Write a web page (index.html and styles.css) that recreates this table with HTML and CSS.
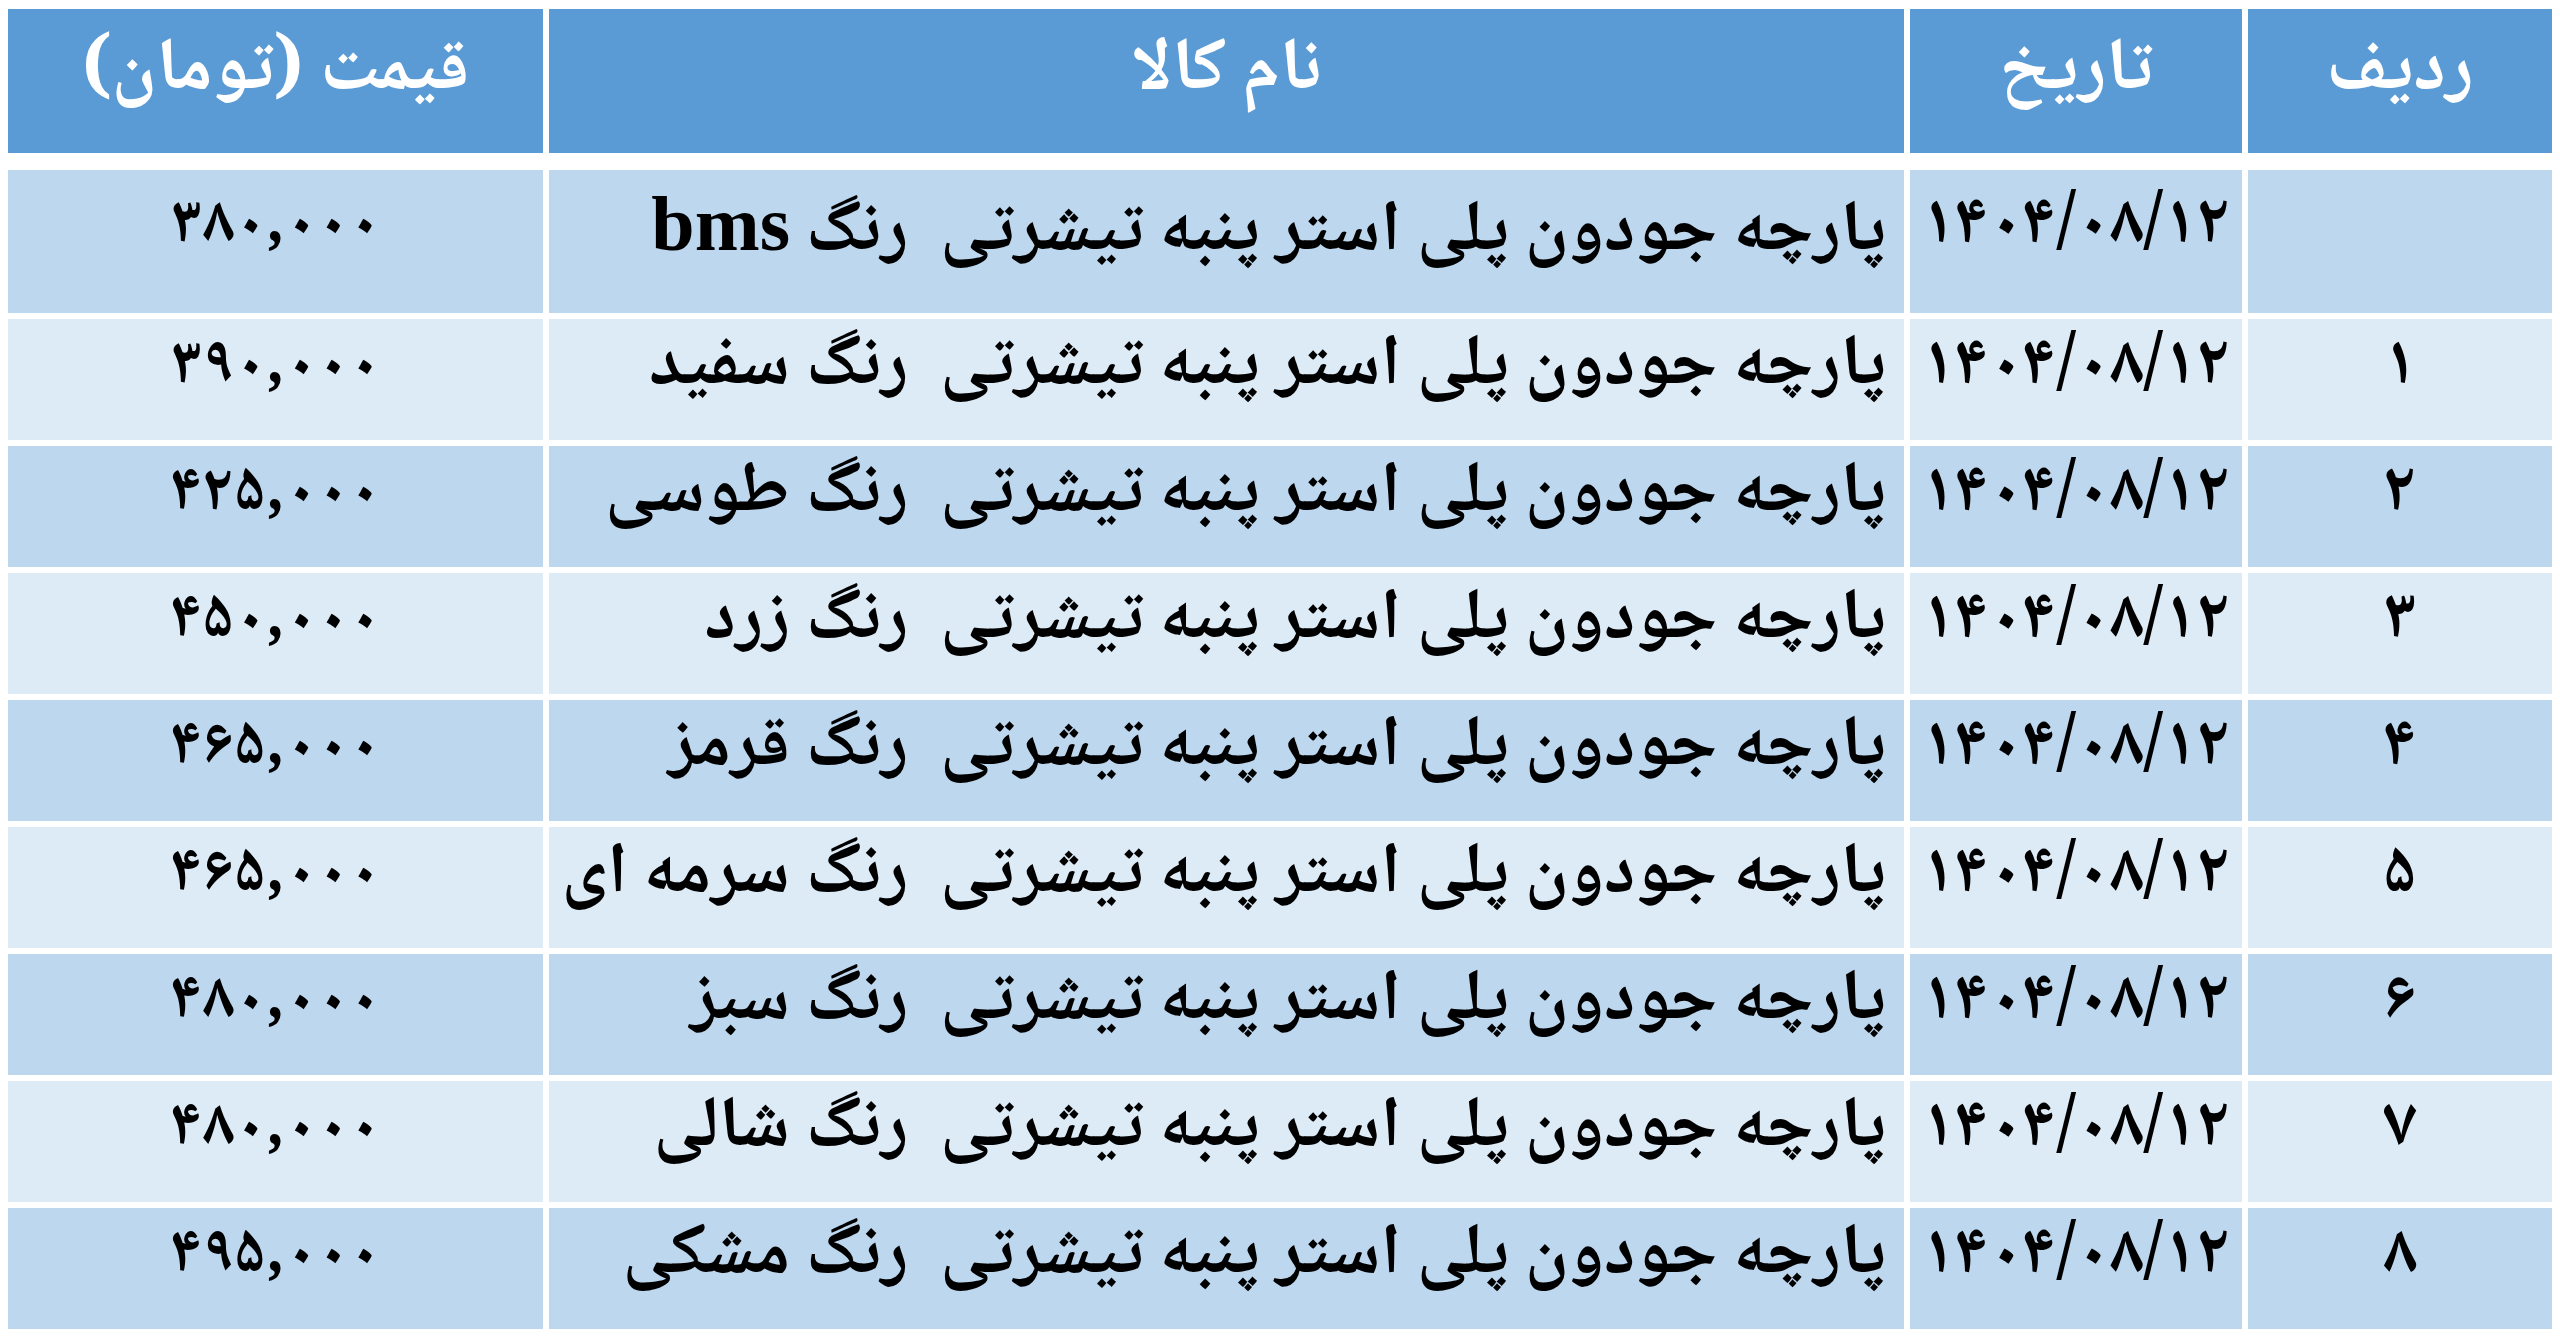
FILE: index.html
```html
<!DOCTYPE html>
<html lang="fa" dir="rtl">
<head>
<meta charset="utf-8">
<title>لیست قیمت</title>
<link rel="stylesheet" href="styles.css">
</head>
<body>
<div class="table">
  <div class="row head">
    <div class="cell"><span>ردیف</span></div>
    <div class="cell"><span>تاریخ</span></div>
    <div class="cell"><span>نام کالا</span></div>
    <div class="cell"><span>قیمت (تومان)</span></div>
  </div>
  <div class="row first dark">
    <div class="cell idx"></div>
    <div class="cell date"><span>۱۴۰۴/۰۸/۱۲</span></div>
    <div class="cell name"><span>پارچه جودون پلی استر پنبه تیشرتی&nbsp; رنگ <span class="latin">bms</span></span></div>
    <div class="cell price"><span>۳۸۰,۰۰۰</span></div>
  </div>
  <div class="row light">
    <div class="cell idx"><span>۱</span></div>
    <div class="cell date"><span>۱۴۰۴/۰۸/۱۲</span></div>
    <div class="cell name"><span>پارچه جودون پلی استر پنبه تیشرتی&nbsp; رنگ سفید</span></div>
    <div class="cell price"><span>۳۹۰,۰۰۰</span></div>
  </div>
  <div class="row dark">
    <div class="cell idx"><span>۲</span></div>
    <div class="cell date"><span>۱۴۰۴/۰۸/۱۲</span></div>
    <div class="cell name"><span>پارچه جودون پلی استر پنبه تیشرتی&nbsp; رنگ طوسی</span></div>
    <div class="cell price"><span>۴۲۵,۰۰۰</span></div>
  </div>
  <div class="row light">
    <div class="cell idx"><span>۳</span></div>
    <div class="cell date"><span>۱۴۰۴/۰۸/۱۲</span></div>
    <div class="cell name"><span>پارچه جودون پلی استر پنبه تیشرتی&nbsp; رنگ زرد</span></div>
    <div class="cell price"><span>۴۵۰,۰۰۰</span></div>
  </div>
  <div class="row dark">
    <div class="cell idx"><span>۴</span></div>
    <div class="cell date"><span>۱۴۰۴/۰۸/۱۲</span></div>
    <div class="cell name"><span>پارچه جودون پلی استر پنبه تیشرتی&nbsp; رنگ قرمز</span></div>
    <div class="cell price"><span>۴۶۵,۰۰۰</span></div>
  </div>
  <div class="row light">
    <div class="cell idx"><span>۵</span></div>
    <div class="cell date"><span>۱۴۰۴/۰۸/۱۲</span></div>
    <div class="cell name"><span>پارچه جودون پلی استر پنبه تیشرتی&nbsp; رنگ سرمه ای</span></div>
    <div class="cell price"><span>۴۶۵,۰۰۰</span></div>
  </div>
  <div class="row dark">
    <div class="cell idx"><span>۶</span></div>
    <div class="cell date"><span>۱۴۰۴/۰۸/۱۲</span></div>
    <div class="cell name"><span>پارچه جودون پلی استر پنبه تیشرتی&nbsp; رنگ سبز</span></div>
    <div class="cell price"><span>۴۸۰,۰۰۰</span></div>
  </div>
  <div class="row light">
    <div class="cell idx"><span>۷</span></div>
    <div class="cell date"><span>۱۴۰۴/۰۸/۱۲</span></div>
    <div class="cell name"><span>پارچه جودون پلی استر پنبه تیشرتی&nbsp; رنگ شالی</span></div>
    <div class="cell price"><span>۴۸۰,۰۰۰</span></div>
  </div>
  <div class="row dark">
    <div class="cell idx"><span>۸</span></div>
    <div class="cell date"><span>۱۴۰۴/۰۸/۱۲</span></div>
    <div class="cell name"><span>پارچه جودون پلی استر پنبه تیشرتی&nbsp; رنگ مشکی</span></div>
    <div class="cell price"><span>۴۹۵,۰۰۰</span></div>
  </div>
</div>
</body>
</html>
```

FILE: styles.css
```css
html, body {
  background: #ffffff;
}
body {
  margin: 9px 8px 0 8px;
  font-family: "Noto Naskh Arabic", "DejaVu Sans", sans-serif;
  font-weight: bold;
  color: #000000;
}
.table {
  display: flex;
  flex-direction: column;
  gap: 6px;
  width: 2544px;
}
.row {
  display: grid;
  grid-template-columns: 304px 332px 1355px 535px;
  grid-template-rows: 100%;
  column-gap: 6px;
  height: 121px;
}
.row.head {
  height: 144px;
  margin-bottom: 11px;
}
.row.first {
  height: 143px;
}
.cell {
  display: flex;
  align-items: center;
  justify-content: center;
  padding-bottom: 22px;
  box-sizing: border-box;
  white-space: nowrap;
  line-height: 1;
  overflow: visible;
}
.first .cell {
  padding-bottom: 28px;
}
.head .cell {
  background: #5b9bd5;
  color: #ffffff;
  font-size: 74px;
  padding-bottom: 16px;
}
.dark .cell {
  background: #bdd7ee;
}
.light .cell {
  background: #ddebf7;
}
.cell.name {
  justify-content: flex-start;
  padding-right: 18px;
  font-size: 72px;
}
.cell.date {
  font-size: 69px;
}
.cell.price {
  font-size: 65px;
}
.cell.idx {
  font-size: 69px;
}
.latin {
  font-family: "Liberation Serif", serif;
  font-size: 78px;
}
```
